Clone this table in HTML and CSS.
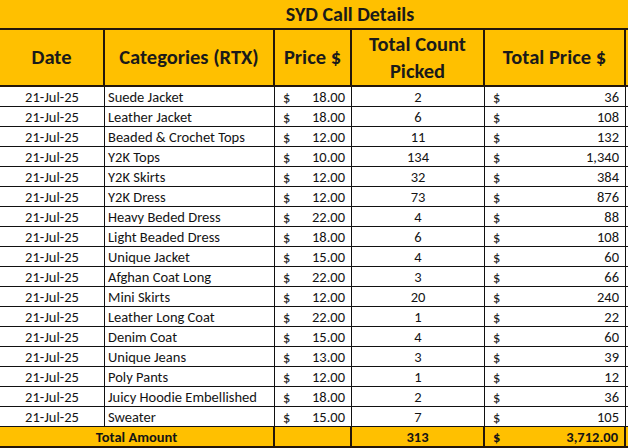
FILE: index.html
```html
<!DOCTYPE html>
<html>
<head>
<meta charset="utf-8">
<link rel="stylesheet" href="styles.css">
</head>
<body>
<table class="sheet">
  <colgroup>
    <col class="c-date"><col class="c-cat"><col class="c-price"><col class="c-count"><col class="c-total"><col class="c-extra">
  </colgroup>
  <tr class="title-row"><td colspan="6" class="title">SYD Call Details</td></tr>
  <tr class="head-row">
    <th>Date</th>
    <th>Categories (RTX)</th>
    <th>Price $</th>
    <th class="two">Total Count<br>Picked</th>
    <th>Total Price $</th>
    <th class="blank"></th>
  </tr>
  <tr><td class="date">21-Jul-25</td><td class="cat">Suede Jacket</td><td class="money"><div class="acc"><span>$</span><span>18.00</span></div></td><td class="count">2</td><td class="money"><div class="acc"><span>$</span><span>36</span></div></td><td class="blank"></td></tr>
  <tr><td class="date">21-Jul-25</td><td class="cat">Leather Jacket</td><td class="money"><div class="acc"><span>$</span><span>18.00</span></div></td><td class="count">6</td><td class="money"><div class="acc"><span>$</span><span>108</span></div></td><td class="blank"></td></tr>
  <tr><td class="date">21-Jul-25</td><td class="cat">Beaded &amp; Crochet Tops</td><td class="money"><div class="acc"><span>$</span><span>12.00</span></div></td><td class="count">11</td><td class="money"><div class="acc"><span>$</span><span>132</span></div></td><td class="blank"></td></tr>
  <tr><td class="date">21-Jul-25</td><td class="cat">Y2K Tops</td><td class="money"><div class="acc"><span>$</span><span>10.00</span></div></td><td class="count">134</td><td class="money"><div class="acc"><span>$</span><span>1,340</span></div></td><td class="blank"></td></tr>
  <tr><td class="date">21-Jul-25</td><td class="cat">Y2K Skirts</td><td class="money"><div class="acc"><span>$</span><span>12.00</span></div></td><td class="count">32</td><td class="money"><div class="acc"><span>$</span><span>384</span></div></td><td class="blank"></td></tr>
  <tr><td class="date">21-Jul-25</td><td class="cat">Y2K Dress</td><td class="money"><div class="acc"><span>$</span><span>12.00</span></div></td><td class="count">73</td><td class="money"><div class="acc"><span>$</span><span>876</span></div></td><td class="blank"></td></tr>
  <tr><td class="date">21-Jul-25</td><td class="cat">Heavy Beded Dress</td><td class="money"><div class="acc"><span>$</span><span>22.00</span></div></td><td class="count">4</td><td class="money"><div class="acc"><span>$</span><span>88</span></div></td><td class="blank"></td></tr>
  <tr><td class="date">21-Jul-25</td><td class="cat">Light Beaded Dress</td><td class="money"><div class="acc"><span>$</span><span>18.00</span></div></td><td class="count">6</td><td class="money"><div class="acc"><span>$</span><span>108</span></div></td><td class="blank"></td></tr>
  <tr><td class="date">21-Jul-25</td><td class="cat">Unique Jacket</td><td class="money"><div class="acc"><span>$</span><span>15.00</span></div></td><td class="count">4</td><td class="money"><div class="acc"><span>$</span><span>60</span></div></td><td class="blank"></td></tr>
  <tr><td class="date">21-Jul-25</td><td class="cat">Afghan Coat Long</td><td class="money"><div class="acc"><span>$</span><span>22.00</span></div></td><td class="count">3</td><td class="money"><div class="acc"><span>$</span><span>66</span></div></td><td class="blank"></td></tr>
  <tr><td class="date">21-Jul-25</td><td class="cat">Mini Skirts</td><td class="money"><div class="acc"><span>$</span><span>12.00</span></div></td><td class="count">20</td><td class="money"><div class="acc"><span>$</span><span>240</span></div></td><td class="blank"></td></tr>
  <tr><td class="date">21-Jul-25</td><td class="cat">Leather Long Coat</td><td class="money"><div class="acc"><span>$</span><span>22.00</span></div></td><td class="count">1</td><td class="money"><div class="acc"><span>$</span><span>22</span></div></td><td class="blank"></td></tr>
  <tr><td class="date">21-Jul-25</td><td class="cat">Denim Coat</td><td class="money"><div class="acc"><span>$</span><span>15.00</span></div></td><td class="count">4</td><td class="money"><div class="acc"><span>$</span><span>60</span></div></td><td class="blank"></td></tr>
  <tr><td class="date">21-Jul-25</td><td class="cat">Unique Jeans</td><td class="money"><div class="acc"><span>$</span><span>13.00</span></div></td><td class="count">3</td><td class="money"><div class="acc"><span>$</span><span>39</span></div></td><td class="blank"></td></tr>
  <tr><td class="date">21-Jul-25</td><td class="cat">Poly Pants</td><td class="money"><div class="acc"><span>$</span><span>12.00</span></div></td><td class="count">1</td><td class="money"><div class="acc"><span>$</span><span>12</span></div></td><td class="blank"></td></tr>
  <tr><td class="date">21-Jul-25</td><td class="cat">Juicy Hoodie Embellished</td><td class="money"><div class="acc"><span>$</span><span>18.00</span></div></td><td class="count">2</td><td class="money"><div class="acc"><span>$</span><span>36</span></div></td><td class="blank"></td></tr>
  <tr><td class="date">21-Jul-25</td><td class="cat">Sweater</td><td class="money"><div class="acc"><span>$</span><span>15.00</span></div></td><td class="count">7</td><td class="money"><div class="acc"><span>$</span><span>105</span></div></td><td class="blank"></td></tr>
  <tr class="total-row">
    <td colspan="2" class="total-label">Total Amount</td>
    <td></td>
    <td class="count">313</td>
    <td class="money"><div class="acc"><span>$</span><span>3,712.00</span></div></td>
    <td class="blank"></td>
  </tr>
</table>
</body>
</html>
```

FILE: styles.css
```css
html, body {
  margin: 0;
  padding: 0;
  overflow: hidden;
  background: #ffffff;
}

.sheet {
  border-collapse: separate;
  border-spacing: 0;
  table-layout: fixed;
  width: 628px;
  font-family: "Carlito", "Lato", "Liberation Sans", sans-serif;
  font-size: 14.5px;
  color: #141414;
}

.c-date { width: 105px; }
.c-cat { width: 170px; }
.c-price { width: 77px; }
.c-count { width: 133px; }
.c-total { width: 141px; }
.c-extra { width: 2px; }

.sheet td, .sheet th {
  box-sizing: border-box;
  padding: 0;
  border-right: 1px solid #111;
  border-bottom: 1px solid #111;
  white-space: nowrap;
  overflow: hidden;
  vertical-align: middle;
}

.title-row .title {
  height: 30px;
  padding-left: 72px;
  background: #ffc000;
  border-right: none;
  border-bottom: 2px solid #24160a;
  font-weight: 700;
  font-size: 20px;
  text-align: center;
  color: #1a1a1a;
}

.head-row th {
  height: 57px;
  background: #ffc000;
  border-bottom: 2px solid #24160a;
  border-right: 2px solid #24160a;
  font-weight: 700;
  font-size: 20.5px;
  color: #1a1a1a;
  text-align: center;
  line-height: 27px;
}

.head-row th.blank { border-right: none; }

.sheet tr td { height: 20px; }

td.date { text-align: center; }
td.cat { padding-left: 3px; }
td.count { text-align: center; }

.acc {
  display: flex;
  justify-content: space-between;
  padding: 0 6px 0 8px;
}

td.blank { border-right: none; }

.sheet .total-row td {
  height: 22px;
  background: #ffc000;
  font-weight: 700;
  border-bottom: 3px solid #24160a;
  border-right: 2px solid #24160a;
}

.total-row .total-label { text-align: center; }
.sheet .total-row td.blank { border-right: none; }
```
